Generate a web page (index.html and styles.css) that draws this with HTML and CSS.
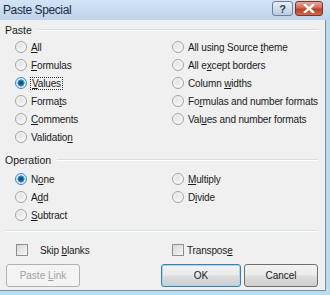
FILE: index.html
```html
<!DOCTYPE html>
<html>
<head>
<meta charset="utf-8">
<link rel="stylesheet" href="styles.css">
</head>
<body>
<div class="window">
  <div class="titlebar">
    <span class="title">Paste Special</span>
    <div class="tbtns">
      <span class="tbtn help">?</span>
      <span class="tbtn close">
        <svg width="12" height="9" viewBox="0 0 12 9"><path d="M2 1 L10 8 M10 1 L2 8" stroke="#fff" stroke-width="2.4" stroke-linecap="square"/></svg>
      </span>
    </div>
  </div>
  <div class="frame">
    <div class="body">
      <div class="ghead"><span>Paste</span><i></i></div>
      <div class="grid paste">
        <div class="opt"><span class="radio"></span><span><u>A</u>ll</span></div>
        <div class="opt"><span class="radio"></span><span>All using Source <u>t</u>heme</span></div>
        <div class="opt"><span class="radio"></span><span><u>F</u>ormulas</span></div>
        <div class="opt"><span class="radio"></span><span>All e<u>x</u>cept borders</span></div>
        <div class="opt"><span class="radio on"></span><span class="focus"><u>V</u>alues</span></div>
        <div class="opt"><span class="radio"></span><span>Column <u>w</u>idths</span></div>
        <div class="opt"><span class="radio"></span><span>Forma<u>t</u>s</span></div>
        <div class="opt"><span class="radio"></span><span>Fo<u>r</u>mulas and number formats</span></div>
        <div class="opt"><span class="radio"></span><span><u>C</u>omments</span></div>
        <div class="opt"><span class="radio"></span><span>Val<u>u</u>es and number formats</span></div>
        <div class="opt"><span class="radio"></span><span>Validatio<u>n</u></span></div>
      </div>
      <div class="ghead op"><span>Operation</span><i></i></div>
      <div class="grid ops">
        <div class="opt"><span class="radio on"></span><span>N<u>o</u>ne</span></div>
        <div class="opt"><span class="radio"></span><span><u>M</u>ultiply</span></div>
        <div class="opt"><span class="radio"></span><span>A<u>d</u>d</span></div>
        <div class="opt"><span class="radio"></span><span>D<u>i</u>vide</span></div>
        <div class="opt"><span class="radio"></span><span><u>S</u>ubtract</span></div>
      </div>
      <div class="sep"></div>
      <div class="grid checks">
        <div class="opt skip"><span class="check"></span><span>Skip <u>b</u>lanks</span></div>
        <div class="opt"><span class="check"></span><span>Transpos<u>e</u></span></div>
      </div>
      <div class="buttons">
        <span class="btn disabled"><span>Paste <u>L</u>ink</span></span>
        <span class="spacer"></span>
        <span class="btn default">OK</span>
        <span class="btn">Cancel</span>
      </div>
    </div>
  </div>
</div>
</body>
</html>
```
FILE: styles.css
```css
html, body {
  margin: 0;
  padding: 0;
}
body {
  width: 330px;
  height: 295px;
  overflow: hidden;
  font-family: "Liberation Sans", Arial, sans-serif;
  font-size: 10px;
  color: #1a1a1a;
  background: #b9dcef;
}
.window {
  width: 330px;
  height: 295px;
  display: flex;
  flex-direction: column;
}
.titlebar {
  height: 20px;
  flex: none;
  display: flex;
  align-items: flex-start;
  justify-content: space-between;
  background: linear-gradient(#d3e3f5, #bed4ec);
}
.title {
  font-size: 12px;
  color: #1c2a3a;
  padding: 3px 0 0 3px;
  letter-spacing: -0.4px;
}
.tbtns {
  display: flex;
  gap: 2px;
  padding: 1px 7px 0 0;
}
.tbtn {
  height: 15px;
  border: 1px solid #6d7f99;
  border-radius: 3px;
  display: flex;
  align-items: center;
  justify-content: center;
  box-sizing: border-box;
}
.help {
  width: 21px;
  background: linear-gradient(#e7eef7, #bccde2);
  color: #2d3f5a;
  font-weight: bold;
  font-size: 11px;
}
.close {
  width: 28px;
  background: linear-gradient(#e7a99c 0%, #d06a56 45%, #bd3d25 55%, #cf6a4c 100%);
  border-color: #7a3528;
}
.frame {
  flex: 1;
  display: flex;
  padding: 0 4px 4px 0;
  min-width: 0;
}
.body {
  flex: 1;
  min-width: 0;
  background: #f0f0f0;
  border-right: 1px solid #7d8fa4;
  border-bottom: 1px solid #7d8fa4;
  padding: 3px 7px 0 5px;
  display: flex;
  flex-direction: column;
}
.ghead {
  display: flex;
  align-items: center;
  height: 13px;
  gap: 6px;
  font-size: 10.5px;
}
.ghead i {
  flex: 1;
  height: 0;
  border-top: 1px solid #d5dfe5;
  border-bottom: 1px solid #fff;
  margin-top: 1px;
}
.grid {
  display: grid;
  grid-template-columns: 157px 1fr;
  grid-auto-rows: 18px;
  padding-left: 10px;
}
.paste {
  margin-top: 2px;
}
.op {
  margin-top: 7px;
}
.ops {
  margin-top: 4px;
}
.opt {
  display: flex;
  align-items: center;
  gap: 4px;
  white-space: nowrap;
  letter-spacing: -0.15px;
}
.radio {
  width: 12px;
  height: 12px;
  border-radius: 50%;
  border: 1px solid #a4a4a4;
  background: radial-gradient(circle at 45% 40%, #e4e4e4 0%, #ececec 35%, #f8f8f8 60%, #dcdcdc 100%);
  flex: none;
  box-sizing: border-box;
}
.radio.on {
  border-color: #4a86b4;
  background: radial-gradient(circle, #0c3350 0%, #1d6a9c 30%, #4aa1d6 48%, #d7ecf7 54%, #eef6fb 100%);
}
.focus {
  outline: 1px dotted #333;
  outline-offset: 0px;
  padding: 0 1px;
}
.sep {
  margin-top: 6px;
  height: 0;
  border-top: 1px solid #d5dfe5;
  border-bottom: 1px solid #fff;
}
.checks {
  margin-top: 9px;
}
.checks .opt {
  gap: 3px;
}
.checks .opt.skip {
  gap: 12px;
  padding-left: 1px;
}
.check {
  width: 12px;
  height: 12px;
  box-sizing: border-box;
  border: 1px solid #8f8f8f;
  background: linear-gradient(135deg, #d8d8d8, #f6f6f6);
  flex: none;
}
.buttons {
  display: flex;
  margin-top: 5px;
  gap: 3px;
  padding-left: 1px;
}
.spacer {
  flex: 1;
}
.btn {
  height: 23px;
  width: 74px;
  flex: none;
  box-sizing: border-box;
  border: 1px solid #707070;
  border-radius: 3px;
  background: linear-gradient(#f2f2f2 0%, #ebebeb 48%, #dddddd 52%, #cfcfcf 100%);
  display: flex;
  align-items: center;
  justify-content: center;
  color: #1a1a1a;
}
.btn.default {
  width: 80px;
  border-color: #3c7fb1;
  box-shadow: inset 0 0 0 1px #a6d6f2;
}
.btn.disabled {
  background: #f4f4f4;
  border-color: #adb2b5;
  color: #a0a0a0;
}
u {
  text-decoration: underline;
  text-underline-offset: 1px;
}
```
